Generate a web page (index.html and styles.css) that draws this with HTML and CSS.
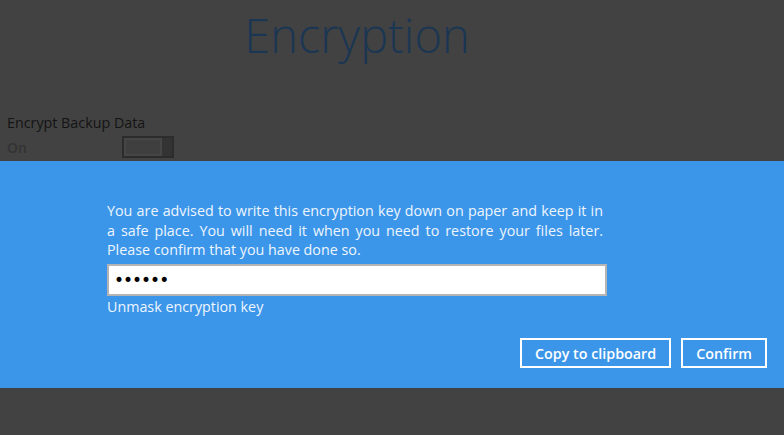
FILE: index.html
```html
<!DOCTYPE html>
<html lang="en">
<head>
    <meta charset="UTF-8">
    <meta name="viewport" content="width=device-width, initial-scale=1.0">
    <title>Encryption</title>
    <link rel="stylesheet" href="styles.css">
</head>
<body>
    <div class="page">
        <h1 class="title">Encryption</h1>
        <div class="setting">
            <div class="setting-label">Encrypt Backup Data</div>
            <div class="setting-row">
                <span class="setting-state">On</span>
                <span class="toggle"><span class="toggle-knob"></span></span>
            </div>
        </div>
    </div>

    <!-- dialog band shown over the dimmed page -->
    <div class="dialog">
        <div class="dialog-body">
            <p class="dialog-text">You are advised to write this encryption key down on paper and keep it in a safe place. You will need it when you need to restore your files later. Please confirm that you have done so.</p>
            <input class="key-input" type="password" value="secret" readonly>
            <a class="unmask-link">Unmask encryption key</a>
        </div>
        <div class="dialog-buttons">
            <button class="dialog-button">Copy to clipboard</button>
            <button class="dialog-button">Confirm</button>
        </div>
    </div>
</body>
</html>
```

FILE: styles.css
```css
body {
    margin: 0;
    padding: 0;
    background: #424242;
    font-family: "Open Sans", "Liberation Sans", sans-serif;
    font-size: 14px;
    height: 435px;
    overflow: hidden;
}
.page {
    width: 714px;
}
.title {
    margin: 4px 0 0 0;
    font-size: 47px;
    font-weight: 300;
    line-height: 63px;
    color: #1b3653;
    text-align: center;
}
.setting {
    margin-top: 46px;
    padding-left: 7px;
}
.setting-label {
    line-height: 20px;
    font-size: 14.3px;
    color: #141414;
}
.setting-row {
    display: flex;
    align-items: center;
    height: 24px;
    margin-top: 2px;
}
.setting-state {
    width: 115px;
    color: #333333;
    font-weight: 600;
}
.toggle {
    display: flex;
    width: 48px;
    height: 18px;
    border: 2px solid #2c2c2c;
    background: #333333;
}
.toggle-knob {
    width: 34px;
    height: 14px;
    margin: 2px;
    background: #3f3f3f;
    box-shadow: 0 0 0 2px #464646;
}
.dialog {
    margin-top: 2px;
    height: 227px;
    background: #3b95e9;
    color: #ffffff;
    box-sizing: border-box;
    padding-top: 40px;
}
.dialog-body {
    width: 500px;
    margin-left: 107px;
}
.dialog-text {
    width: 496px;
    margin: 0 0 4px 0;
    font-size: 14.3px;
    line-height: 19.7px;
    text-align: justify;
    color: #eef5fd;
}
.key-input {
    display: block;
    width: 500px;
    height: 32px;
    box-sizing: border-box;
    border: 2px solid #b4b4b4;
    padding: 0 5px;
    font-size: 17px;
    font-family: "DejaVu Sans", sans-serif;
    letter-spacing: -1px;
    color: #000000;
    outline: none;
}
.unmask-link {
    display: block;
    font-size: 14.3px;
    line-height: 22px;
    color: #eef5fd;
}
.dialog-buttons {
    display: flex;
    justify-content: flex-end;
    gap: 10px;
    padding-right: 17px;
    margin-top: 20px;
}
.dialog-button {
    height: 30px;
    padding: 0 13px;
    background: transparent;
    border: 2px solid #ffffff;
    color: #ffffff;
    font-family: "Open Sans", "Liberation Sans", sans-serif;
    font-size: 14.3px;
    font-weight: 600;
}
```
